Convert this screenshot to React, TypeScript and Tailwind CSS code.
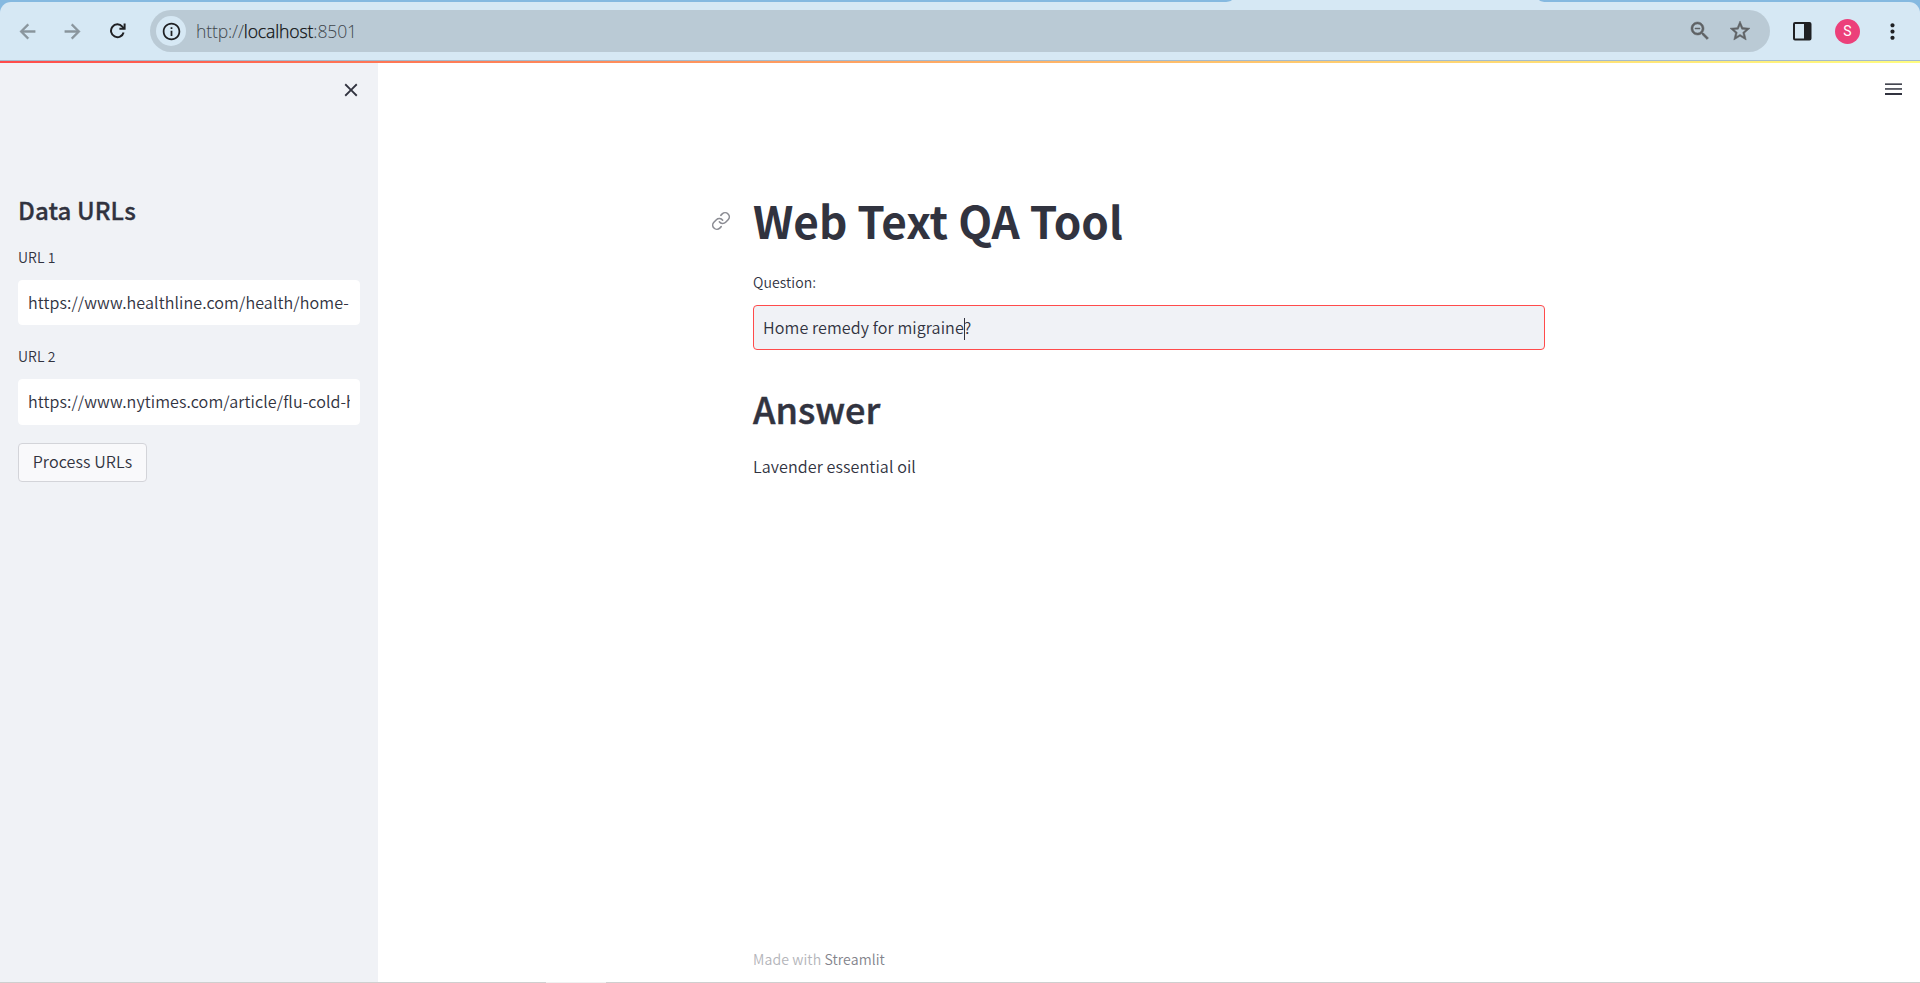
import React from "react";
import { MdInfoOutline, MdMoreVert, MdClose } from "react-icons/md";
import { Link } from "lucide-react";

const BACK = "M20 11H7.83l5.59-5.59L12 4l-8 8 8 8 1.41-1.41L7.83 13H20v-2z";
const FORWARD = "M12 4l-1.41 1.41L16.17 11H4v2h12.17l-5.58 5.59L12 20l8-8z";
const ZOOM_OUT =
  "M15.5 14h-.79l-.28-.27C15.41 12.59 16 11.11 16 9.5 16 5.91 13.09 3 9.5 3S3 5.91 3 9.5 5.91 16 9.5 16c1.61 0 3.09-.59 4.23-1.57l.27.28v.79l5 4.99L20.49 19l-4.99-5zm-6 0C7.01 14 5 11.99 5 9.5S7.01 5 9.5 5 14 7.01 14 9.5 11.99 14 9.5 14zM7 9h5v1H7z";
const STAR =
  "M22 9.24l-7.19-.62L12 2 9.19 8.63 2 9.24l5.46 4.73L5.82 21 12 17.27 18.18 21l-1.63-7.03L22 9.24zM12 15.4l-3.76 2.27 1-4.28-3.32-2.88 4.38-.38L12 6.1l1.71 4.04 4.38.38-3.32 2.88 1 4.28L12 15.4z";

function Glyph({ d, className }: { d: string; className: string }) {
  return (
    <svg viewBox="0 0 24 24" className={className} fill="currentColor" stroke="currentColor" strokeWidth="0.5">
      <path d={d} />
    </svg>
  );
}

function BrowserBar() {
  return (
    <div className="relative h-[61px] shrink-0 bg-[#85b9e0] tracking-normal">
      <svg className="absolute left-0 top-0" width="1920" height="2">
        <path d="M1223 2 Q1230 2 1232 0 H1539 Q1541 2 1547 2 Z" fill="#d6e8f4" />
      </svg>
      <div className="flex h-full flex-col pt-[2px]">
        <div className="flex flex-1 items-center rounded-t-[11px] border-b border-[#a5bbcd] bg-[#d6e8f4] text-[#1f2023]">
          <Glyph d={BACK} className="ml-[16px] size-[23px] text-[#8a959d]" />
          <Glyph d={FORWARD} className="ml-[22px] size-[23px] text-[#8a959d]" />
          <svg className="ml-[26px]" width="16" height="16" viewBox="0 0 16 16" fill="none" stroke="currentColor" strokeWidth="2">
            <path d="M13.6 9.4A6.4 6.4 0 1 1 12.3 3.6L14.2 5.6" />
            <path d="M14.6 0.4V5.8H9.4" />
          </svg>
          <div className="ml-[24px] flex h-[42px] w-[1620px] items-center rounded-full bg-[#bacad5] pl-[6px]">
            <div className="flex size-[30px] items-center justify-center rounded-full bg-[#d6e8f4]">
              <MdInfoOutline className="size-[21px]" />
            </div>
            <div className="ml-[10px] flex-1 font-['Open_Sans',sans-serif] text-[17.6px] font-light tracking-[-0.14px] text-[#3e464c]">
              http://<span className="text-[#0c0e0f] [-webkit-text-stroke:0.25px_#0c0e0f]">localhost</span>:8501
            </div>
            <Glyph d={ZOOM_OUT} className="size-[24px] text-[#5f6265]" />
            <Glyph d={STAR} className="ml-[16px] mr-[18px] size-[24px] text-[#5f6265]" />
          </div>
          <svg className="ml-[23px]" width="19" height="19" viewBox="0 0 19 19">
            <rect x="1" y="1" width="16.5" height="16.5" rx="1" fill="none" stroke="currentColor" strokeWidth="2" />
            <rect x="11" y="1" width="7" height="17" fill="currentColor" />
          </svg>
          <div className="ml-[23px] flex size-[25px] items-center justify-center rounded-full bg-[#ec407a] font-[Roboto,sans-serif] text-[14px] font-normal text-white">S</div>
          <MdMoreVert className="ml-[20px] size-[25px]" />
        </div>
      </div>
    </div>
  );
}

function TextField({ value, className }: { value: React.ReactNode; className: string }) {
  return (
    <div className={`flex items-center rounded-[4px] border px-[9px] pb-[2px] ${className}`}>
      <div className="flex-1 overflow-hidden whitespace-nowrap text-[16.1px] leading-[28px]">{value}</div>
    </div>
  );
}

export default function App() {
  return (
    <div className="flex h-[983px] w-[1920px] flex-col overflow-hidden bg-white font-['Noto_Sans_CJK_SC',sans-serif] font-[350] tracking-[0.09px] text-[#31333f]">
      <BrowserBar />
      <div className="h-[2px] shrink-0 bg-linear-to-r from-[#ff4b4b] to-[#fffd80]" />
      <div className="flex min-h-0 flex-1">
        <aside className="flex w-[378px] shrink-0 flex-col bg-[#f0f2f6] px-[18px]">
          <div className="flex h-[131px] justify-end pt-[16px]">
            <MdClose className="-mr-[2px] size-[22px]" />
          </div>
          <h2 className="text-[24.1px] font-medium leading-[32px] [-webkit-text-stroke:0.3px_#31333f]">Data URLs</h2>
          <label className="mt-[19px] text-[14px] leading-[24px]">URL 1</label>
          <TextField className="mt-[11px] h-[45px] border-white bg-white" value="https://www.healthline.com/health/home-" />
          <label className="mt-[19px] text-[14px] leading-[24px]">URL 2</label>
          <TextField className="mt-[11px] h-[46px] border-white bg-white" value="https://www.nytimes.com/article/flu-cold-home" />
          <button className="mt-[18px] h-[39px] w-[129px] rounded-[4px] border border-[#d3d4d9] bg-[#f9f9fb] pb-[3px] text-[16.1px] leading-[26px]">
            Process URLs
          </button>
        </aside>
        <main className="flex flex-1 flex-col pl-[375px]">
          <div className="-ml-[375px] flex h-[127px] justify-end pr-[18px] pt-[20px]">
            <svg width="17" height="13" viewBox="0 0 17 13" fill="currentColor">
              <rect y="0.4" width="17" height="1.5" />
              <rect y="5.2" width="17" height="1.5" />
              <rect y="10" width="17" height="2" />
            </svg>
          </div>
          <div className="flex items-center">
            <Link className="-ml-[42px] mr-[22px] mt-[1px] size-[20px] text-[#8b8c93]" strokeWidth={1.9} />
            <h1 className="text-[44.1px] font-bold leading-[60px] tracking-normal">Web Text QA Tool</h1>
          </div>
          <label className="mt-[20px] text-[14.05px] leading-[24px]">Question:</label>
          <TextField
            className="mt-[11px] h-[45px] w-[792px] border-[#ff4b4b] bg-[#f0f2f6]"
            value={<>Home remedy for migraine<span className="-mr-px inline-block h-[22px] w-px bg-[#31333f] align-middle" />?</>}
          />
          <h2 className="mt-[34px] text-[36.1px] font-medium leading-[48px] tracking-normal [-webkit-text-stroke:0.5px_#31333f]">Answer</h2>
          <p className="mt-[20px] text-[16.1px] leading-[28px]">Lavender essential oil</p>
          <footer className="mt-auto pb-[11px] text-[14.1px] leading-[24px] text-[#b4b5ba]">
            Made with <span className="text-[#83848c]">Streamlit</span>
          </footer>
        </main>
      </div>
      <div className="flex h-px shrink-0 bg-[#cfcfcf]">
        <div className="ml-[546px] w-[60px] bg-[#f0f0f0]" />
      </div>
    </div>
  );
}
